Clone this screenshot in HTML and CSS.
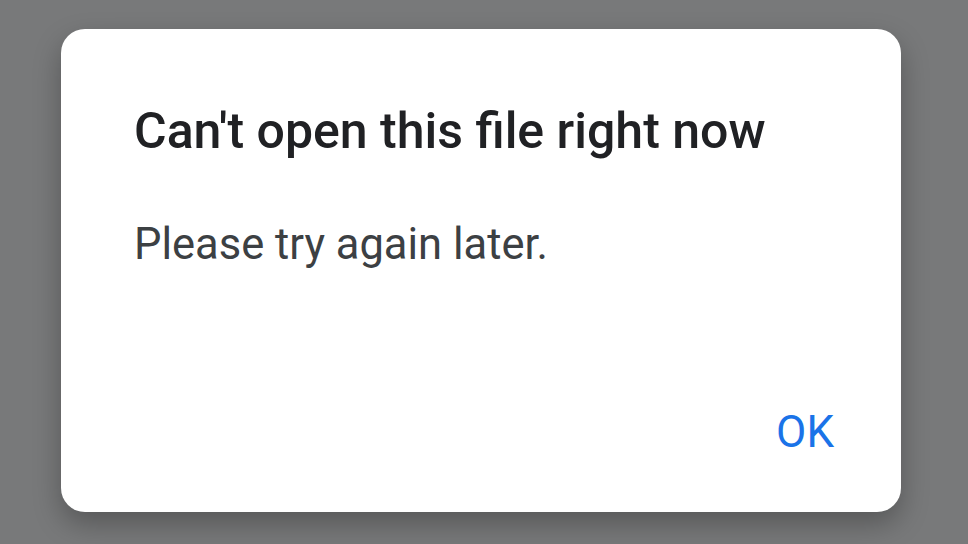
FILE: index.html
```html
<!DOCTYPE html>
<html lang="en">

<head>
    <meta charset="UTF-8" />
    <meta name="viewport" content="width=device-width, initial-scale=1.0" />
    <title>Can't open this file right now</title>
    <link rel="stylesheet" href="styles.css">
</head>

<body>

    <div class="dialog">
        <h1 class="dialog-title">Can't open this file right now</h1>
        <p class="dialog-text">Please try again later.</p>

        <div class="dialog-actions">
            <button class="dialog-button">OK</button>
        </div>
    </div>

</body>

</html>
```

FILE: styles.css
```css
html,
body {
    margin: 0;
    padding: 0;
    height: 100%;
}

body {
    background: #78797a;
    font-family: Roboto, "Liberation Sans", sans-serif;
    overflow: hidden;
}

.dialog {
    margin: 29px 0 0 61px;
    width: 840px;
    height: 483px;
    box-sizing: border-box;
    padding: 0 67px 54px 73px;
    background: #fff;
    border-radius: 24px;
    box-shadow: 0 12px 28px rgba(0, 0, 0, 0.28);
    display: flex;
    flex-direction: column;
}

.dialog-title {
    margin: 72px 0 0;
    font-size: 50px;
    line-height: 60px;
    font-weight: 500;
    color: #202124;
}

.dialog-text {
    margin: 57px 0 0;
    font-size: 43.5px;
    line-height: 54px;
    color: #3c4043;
}

.dialog-actions {
    margin-top: auto;
    display: flex;
    justify-content: flex-end;
}

.dialog-button {
    background: none;
    border: none;
    padding: 0;
    font-family: inherit;
    font-size: 44px;
    font-weight: 400;
    color: #1a73e8;
    cursor: pointer;
}
```
